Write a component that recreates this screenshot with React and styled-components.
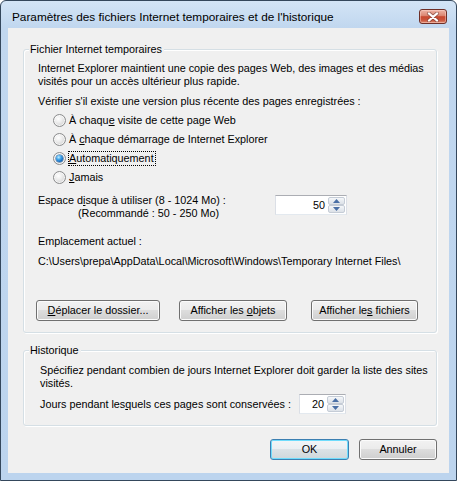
import React from 'react';
import styled, { createGlobalStyle } from 'styled-components';

const Global = createGlobalStyle`
  html, body { margin: 0; padding: 0; background: #ffffff; }
  body {
    width: 457px; height: 481px; overflow: hidden;
    font-family: "Liberation Sans", Arial, sans-serif;
    font-size: 10.8px; color: #000;
  }
  * { box-sizing: border-box; }
`;

const Window = styled.div`
  width: 457px;
  height: 481px;
  display: flex;
  flex-direction: column;
  border: 1px solid #34475c;
  border-radius: 6px 6px 0 0;
  background: linear-gradient(180deg, #d3e4f6 0px, #c1d7ef 26px, #bcd4ee 100%);
  padding: 0 7px 7px 7px;
`;

const TitleBar = styled.div`
  height: 27px;
  flex: 0 0 27px;
  display: flex;
  align-items: center;
  padding: 4px 2px 0 4px;
`;

const Title = styled.div`
  flex: 1;
  font-size: 11.8px;
  white-space: nowrap;
  color: #000;
`;

const CloseButton = styled.div`
  width: 28px;
  height: 15px;
  border: 1px solid #6e2f27;
  border-radius: 3px;
  background: linear-gradient(180deg, #eeb4a6 0%, #dc8874 42%, #c8482f 52%, #c9553d 78%, #e08d73 100%);
  box-shadow: inset 0 0 0 1px rgba(255, 220, 210, 0.45);
  display: flex;
  align-items: center;
  justify-content: center;
`;

const Client = styled.div`
  flex: 1;
  background: #f0f0f0;
  padding: 15px 12px 12px 15px;
  display: flex;
  flex-direction: column;
`;

const GroupBox = styled.fieldset`
  margin: ${p => p.$mt || 0}px 0 0 0;
  min-width: 0;
  border: 1px solid #d5dfe5;
  border-radius: 3px;
  box-shadow: inset 1px 1px 0 #ffffff, 1px 1px 0 #ffffff;
  padding: ${p => p.$pad};
`;

const Legend = styled.legend`
  padding: 0 2px 0 1px;
  margin-left: -9px;
  line-height: 13px;
  background: #f0f0f0;
  white-space: nowrap;
`;

const Text = styled.div`
  line-height: 13px;
  white-space: nowrap;
  margin-top: ${p => p.$mt || 0}px;
  padding-left: ${p => p.$indent || 0}px;
`;

const Key = styled.span`
  text-decoration: underline;
  text-underline-offset: 1px;
`;

const RadioList = styled.div`
  margin-top: 3px;
  padding-left: 15px;
  display: flex;
  flex-direction: column;
`;

const RadioRow = styled.div`
  height: 19px;
  display: flex;
  align-items: center;
  gap: 2px;
`;

const RadioCircle = styled.span`
  width: 13px;
  height: 13px;
  flex: 0 0 13px;
  border-radius: 50%;
  border: 1px solid #8b8c8d;
  background: radial-gradient(circle at 40% 35%, #ffffff 0%, #eeeeee 35%, #d2d2d2 80%, #c4c4c4 100%);
  box-shadow: inset 0 0 0 1px rgba(255, 255, 255, 0.7);
  display: flex;
  align-items: center;
  justify-content: center;
  &::after {
    content: '';
    display: ${p => (p.$checked ? 'block' : 'none')};
    width: 7px;
    height: 7px;
    border-radius: 50%;
    background: radial-gradient(circle at 38% 32%, #c2eeff 0%, #45a7ea 35%, #0d62b8 75%, #0a4588 100%);
    box-shadow: 0 0 0 0.5px #2a5f96;
  }
`;

const RadioLabel = styled.span`
  line-height: 13px;
  padding: 0 1px 0 0;
  border: 1px ${p => (p.$focused ? 'dotted #000' : 'solid transparent')};
  white-space: nowrap;
`;

const FieldRow = styled.div`
  display: flex;
  align-items: ${p => p.$align || 'flex-start'};
  margin-top: ${p => p.$mt || 0}px;
  padding-left: ${p => p.$indent || 0}px;
`;

const FieldLabel = styled.div`
  flex: 0 0 ${p => p.$w}px;
  line-height: 13px;
  white-space: nowrap;
`;

const Spinner = styled.div`
  width: ${p => p.$w}px;
  height: 20px;
  margin-top: ${p => p.$mt || 0}px;
  display: flex;
  background: #ffffff;
  border: 1px solid #dbdfe6;
  border-top-color: #abadb3;
  border-bottom-color: #e3e9ef;
  padding: 1px;
`;

const SpinValue = styled.div`
  flex: 1;
  text-align: right;
  line-height: 16px;
  padding-right: 3px;
`;

const SpinButtons = styled.div`
  width: 17px;
  display: flex;
  flex-direction: column;
`;

const SpinButton = styled.div`
  flex: 1;
  border: 1px solid #c5ccd6;
  border-radius: 2px;
  background: linear-gradient(180deg, #f6f8fa 0%, #e6eaef 55%, #dde2e8 100%);
  display: flex;
  align-items: center;
  justify-content: center;
`;

const ButtonRow = styled.div`
  display: flex;
  margin-top: ${p => p.$mt || 0}px;
  margin-left: ${p => p.$ml || 0}px;
  justify-content: ${p => p.$justify || 'flex-start'};
  gap: ${p => p.$gap || 0}px;
`;

const Button = styled.div`
  width: ${p => p.$w}px;
  height: 21px;
  margin-left: ${p => p.$ml || 0}px;
  border: 1px solid ${p => (p.$default ? '#3c7fb1' : '#707070')};
  border-radius: 3px;
  background: ${p =>
    p.$default
      ? 'linear-gradient(180deg, #f2f5f7 0%, #eaeff2 48%, #dbe2e6 50%, #cfd7db 100%)'
      : 'linear-gradient(180deg, #f2f2f2 0%, #ebebeb 48%, #dddddd 50%, #cfcfcf 100%)'};
  box-shadow: inset 0 0 0 1px ${p => (p.$default ? '#6fdcfc' : '#fbfbfb')};
  display: flex;
  align-items: center;
  justify-content: center;
`;

const ButtonText = styled.span`
  line-height: 13px;
  white-space: nowrap;
`;

const CloseIcon = () => (
  <svg width="14" height="10" viewBox="0 0 14 10">
    <path d="M3 1.5 L11 8.5 M11 1.5 L3 8.5" stroke="#6a3a34" strokeWidth="4" strokeLinecap="round" opacity="0.55" />
    <path d="M3 1.5 L11 8.5 M11 1.5 L3 8.5" stroke="#ffffff" strokeWidth="2.3" strokeLinecap="round" />
  </svg>
);

const Arrow = ({ up }) => (
  <svg width="7" height="4" viewBox="0 0 7 4">
    <path d={up ? 'M0 4 L3.5 0 L7 4 Z' : 'M0 0 L3.5 4 L7 0 Z'} fill="#4a6fa5" />
  </svg>
);

const Spin = ({ value, w, mt }) => (
  <Spinner $w={w} $mt={mt}>
    <SpinValue>{value}</SpinValue>
    <SpinButtons>
      <SpinButton><Arrow up /></SpinButton>
      <SpinButton><Arrow /></SpinButton>
    </SpinButtons>
  </Spinner>
);

const Radio = ({ checked, focused, children }) => (
  <RadioRow>
    <RadioCircle $checked={checked} />
    <RadioLabel $focused={focused}>{children}</RadioLabel>
  </RadioRow>
);

const PushButton = ({ children, ...rest }) => (
  <Button {...rest}>
    <ButtonText>{children}</ButtonText>
  </Button>
);

export default function App() {
  return (
    <>
      <Global />
      <Window>
        <TitleBar>
          <Title>Paramètres des fichiers Internet temporaires et de l'historique</Title>
          <CloseButton><CloseIcon /></CloseButton>
        </TitleBar>
        <Client>
          <GroupBox $pad="6px 8px 11px 14px">
            <Legend>Fichier Internet temporaires</Legend>
            <Text>Internet Explorer maintient une copie des pages Web, des images et des médias</Text>
            <Text>visités pour un accès ultérieur plus rapide.</Text>
            <Text $mt={7}>Vérifier s'il existe une version plus récente des pages enregistrées :</Text>
            <RadioList>
              <Radio>À chaqu<Key>e</Key> visite de cette page Web</Radio>
              <Radio>À <Key>c</Key>haque démarrage de Internet Explorer</Radio>
              <Radio checked focused><Key>A</Key>utomatiquement</Radio>
              <Radio><Key>J</Key>amais</Radio>
            </RadioList>
            <FieldRow $mt={7}>
              <FieldLabel $w={237}>
                <Text>Espace d<Key>i</Key>sque à utiliser (8 - 1024 Mo) :</Text>
                <Text $indent={40}>(Recommandé : 50 - 250 Mo)</Text>
              </FieldLabel>
              <Spin value="50" w={72} mt={1} />
            </FieldRow>
            <Text $mt={15}>Emplacement actuel :</Text>
            <Text $mt={7}>C:\Users\prepa\AppData\Local\Microsoft\Windows\Temporary Internet Files\</Text>
            <ButtonRow $mt={32} $ml={-2}>
              <PushButton $w={124}><Key>D</Key>éplacer le dossier...</PushButton>
              <PushButton $w={108} $ml={19}>Afficher les <Key>o</Key>bjets</PushButton>
              <PushButton $w={107} $ml={24}>Afficher le<Key>s</Key> fichiers</PushButton>
            </ButtonRow>
          </GroupBox>
          <GroupBox $mt={11} $pad="7px 8px 11px 14px">
            <Legend>Historique</Legend>
            <Text $indent={2}>Spécifiez pendant combien de jours Internet Explorer doit garder la liste des sites</Text>
            <Text $indent={2}>visités.</Text>
            <FieldRow $mt={4} $indent={2} $align="center">
              <FieldLabel $w={259}>Jours pendant les<Key>q</Key>uels ces pages sont conservées :</FieldLabel>
              <Spin value="20" w={47} />
            </FieldRow>
          </GroupBox>
          <ButtonRow $mt={13} $justify="flex-end" $gap={10}>
            <PushButton $w={79} $default>OK</PushButton>
            <PushButton $w={78}>Annuler</PushButton>
          </ButtonRow>
        </Client>
      </Window>
    </>
  );
}
